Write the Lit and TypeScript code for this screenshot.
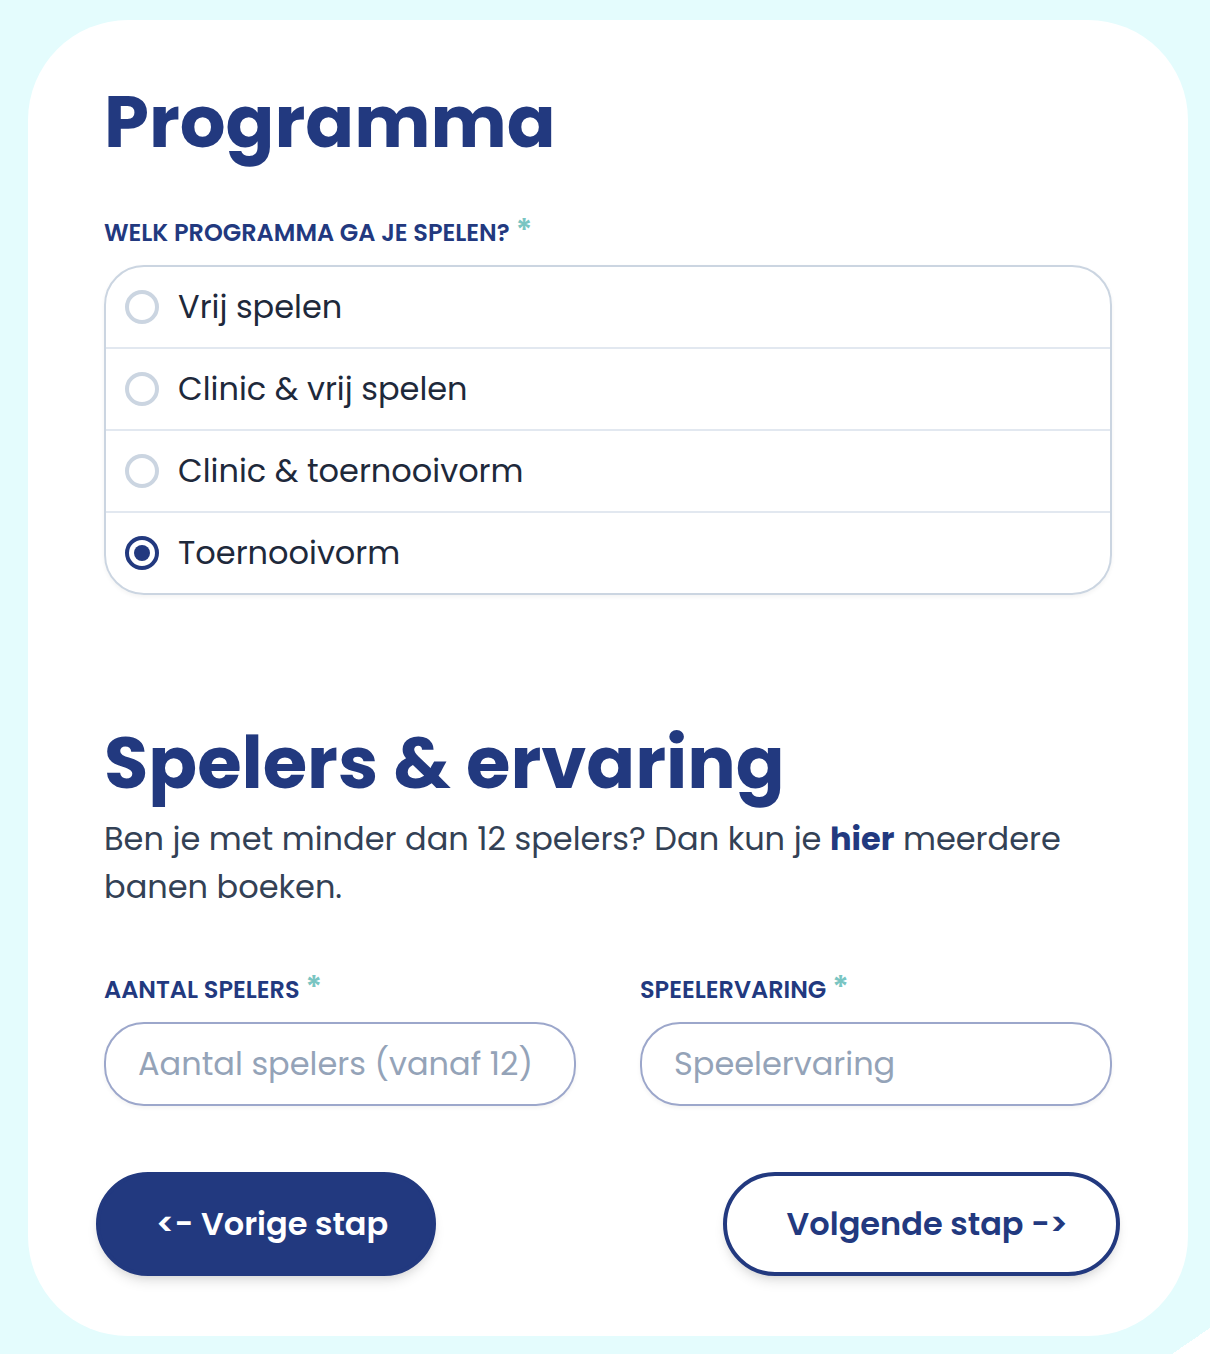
import { LitElement, html, css } from "lit";
import { customElement, state } from "lit/decorators.js";

const PROGRAMS = ["Vrij spelen", "Clinic & vrij spelen", "Clinic & toernooivorm", "Toernooivorm"];

@customElement("app-root")
export class AppRoot extends LitElement {
  static styles = css`
    :host {
      --navy: #22397f;
      --mint: #79c5c2;
      --slate-900: #1e293b;
      --slate-700: #334155;
      --slate-400: #94a3b8;
      --slate-300: #cbd5e1;
      --slate-200: #e2e8f0;
      display: block;
      box-sizing: border-box;
      min-height: 100vh;
      padding: 20px 22px 18px 28px;
      background:
        linear-gradient(to bottom right, transparent 50%, #ffffff 50%) right bottom / 38px 26px no-repeat,
        #e4fcfd;
      font-family: Poppins, Inter, "Liberation Sans", sans-serif;
      font-feature-settings: "calt" 0;
      font-size: 32px;
      color: var(--slate-900);
      -webkit-font-smoothing: antialiased;
    }
    *, *::before, *::after { box-sizing: border-box; }
    .card {
      display: flex;
      flex-direction: column;
      padding: 66px 76px 60px;
      border-radius: 100px;
      background: #ffffff;
    }
    .title {
      margin: 0;
      font-size: 72px;
      line-height: 72px;
      font-weight: 700;
      color: var(--navy);
    }
    .block {
      display: flex;
      flex-direction: column;
      gap: 14px;
    }
    .programs { margin-top: 57px; }
    .intro {
      gap: 16px;
      margin-top: 132px;
    }
    .text {
      margin: 0;
      line-height: 48px;
      color: var(--slate-700);
    }
    .link {
      font-weight: 700;
      color: var(--navy);
      text-decoration: none;
    }
    .label {
      display: flex;
      gap: 6px;
      font-size: 24px;
      line-height: 36px;
      font-weight: 600;
      text-transform: uppercase;
      color: var(--navy);
    }
    .required {
      font-size: 32px;
      line-height: 32px;
      color: var(--mint);
    }
    .options {
      border: 2px solid var(--slate-300);
      border-radius: 40px;
      box-shadow: 0 2px 4px rgba(0, 0, 0, 0.05);
    }
    .option {
      display: flex;
      align-items: center;
      gap: 19px;
      height: 80px;
      padding: 0 19px;
    }
    .option + .option {
      height: 82px;
      border-top: 2px solid var(--slate-200);
    }
    .radio {
      appearance: none;
      display: grid;
      place-items: center;
      flex: none;
      width: 34px;
      height: 34px;
      margin: 0;
      border: 4px solid var(--slate-300);
      border-radius: 50%;
      background: #ffffff;
    }
    .radio:checked { border-color: var(--navy); }
    .radio:checked::before {
      content: "";
      width: 16px;
      height: 16px;
      border-radius: 50%;
      background: var(--navy);
    }
    .fields {
      display: grid;
      grid-template-columns: 1fr 1fr;
      gap: 64px;
      margin-top: 61px;
    }
    .input {
      width: 100%;
      height: 84px;
      padding: 0 32px;
      border: 2px solid #9ca7cb;
      border-radius: 40px;
      background: #ffffff;
      box-shadow: 0 2px 4px rgba(0, 0, 0, 0.05);
      font: inherit;
      font-feature-settings: inherit;
      color: var(--slate-900);
    }
    .input::placeholder {
      color: var(--slate-400);
      opacity: 1;
    }
    .actions {
      display: flex;
      justify-content: space-between;
      margin: 66px -8px 0;
    }
    .button {
      height: 104px;
      padding: 0 48px 0 60px;
      border: 4px solid var(--navy);
      border-radius: 52px;
      box-shadow: 0 8px 12px -2px rgba(0, 0, 0, 0.1), 0 4px 8px -4px rgba(0, 0, 0, 0.1);
      background: #ffffff;
      font: inherit;
      font-feature-settings: inherit;
      font-weight: 600;
      color: var(--navy);
      cursor: pointer;
    }
    .solid {
      padding: 0 44px 0 56px;
      background: var(--navy);
      color: #ffffff;
    }
  `;

  @state() private program = "Toernooivorm";

  private field(id: string, label: string, placeholder: string) {
    return html`
      <div class="block">
        <label class="label" for=${id}>${label}<span class="required">*</span></label>
        <input class="input" id=${id} type="text" placeholder=${placeholder} required />
      </div>
    `;
  }

  render() {
    return html`
      <form class="card" @submit=${(e: Event) => e.preventDefault()}>
        <h2 class="title">Programma</h2>
        <div class="block programs" role="radiogroup" aria-labelledby="program-label">
          <div class="label" id="program-label">Welk programma ga je spelen?<span class="required">*</span></div>
          <div class="options">
            ${PROGRAMS.map(
              (name) => html`
                <label class="option">
                  <input
                    class="radio"
                    type="radio"
                    name="program"
                    .value=${name}
                    .checked=${this.program === name}
                    @change=${() => (this.program = name)}
                  />
                  <span>${name}</span>
                </label>
              `,
            )}
          </div>
        </div>
        <div class="block intro">
          <h2 class="title">Spelers &amp; ervaring</h2>
          <p class="text">
            Ben je met minder dan 12 spelers? Dan kun je <a class="link" href="#banen">hier</a> meerdere banen boeken.
          </p>
        </div>
        <div class="fields">
          ${this.field("players", "Aantal spelers", "Aantal spelers (vanaf 12)")}
          ${this.field("experience", "Speelervaring", "Speelervaring")}
        </div>
        <div class="actions">
          <button class="button solid" type="button">&lt;- Vorige stap</button>
          <button class="button" type="submit">Volgende stap -&gt;</button>
        </div>
      </form>
    `;
  }
}
